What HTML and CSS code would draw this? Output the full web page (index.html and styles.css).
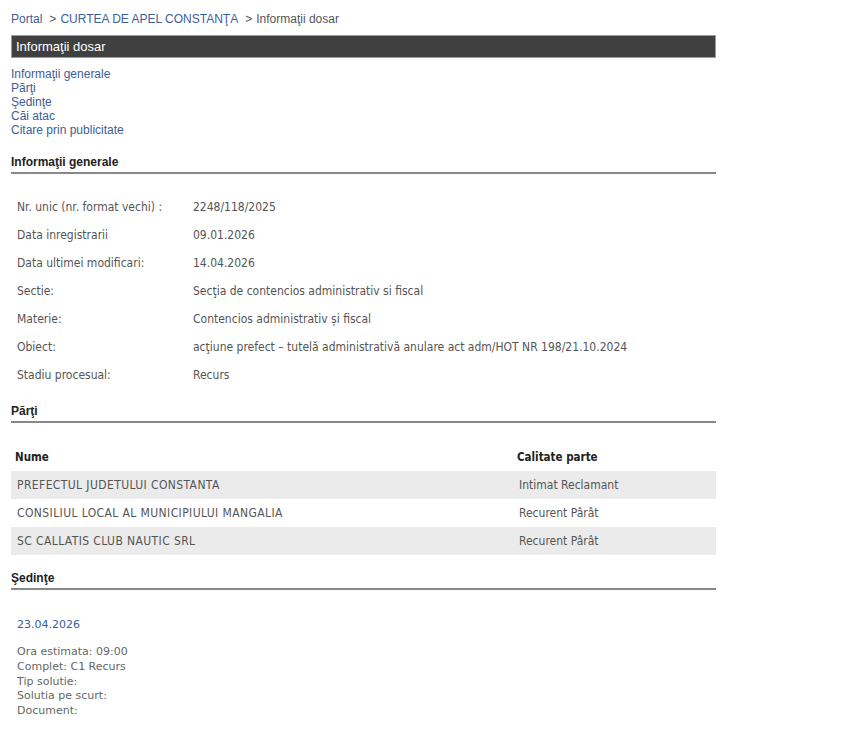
FILE: index.html
```html
<!DOCTYPE html>
<html lang="ro">
<head>
    <meta charset="UTF-8">
    <title>Informaţii dosar</title>
    <link rel="stylesheet" href="styles.css">
</head>
<body>
<div class="pagina">
    <div class="breadcrumb">
        <a href="#">Portal</a><span class="sep">&gt;</span><a href="#">CURTEA DE APEL CONSTANŢA</a><span class="sep">&gt;</span>Informaţii dosar
    </div>
    <div class="titlu">Informaţii dosar</div>

    <ul class="cuprins">
        <li><a href="#generale">Informaţii generale</a></li>
        <li><a href="#parti">Părţi</a></li>
        <li><a href="#sedinte">Şedinţe</a></li>
        <li><a href="#cai">Căi atac</a></li>
        <li><a href="#citare">Citare prin publicitate</a></li>
    </ul>

    <h3 class="sectiune" id="generale">Informaţii generale</h3>
    <table class="detalii">
        <tr><td class="eticheta">Nr. unic (nr. format vechi) :</td><td>2248/118/2025</td></tr>
        <tr><td class="eticheta">Data inregistrarii</td><td>09.01.2026</td></tr>
        <tr><td class="eticheta">Data ultimei modificari:</td><td>14.04.2026</td></tr>
        <tr><td class="eticheta">Sectie:</td><td>Secţia de contencios administrativ si fiscal</td></tr>
        <tr><td class="eticheta">Materie:</td><td>Contencios administrativ și fiscal</td></tr>
        <tr><td class="eticheta">Obiect:</td><td>acţiune prefect – tutelă administrativă anulare act adm/HOT NR 198/21.10.2024</td></tr>
        <tr><td class="eticheta">Stadiu procesual:</td><td>Recurs</td></tr>
    </table>

    <h3 class="sectiune" id="parti">Părţi</h3>
    <table class="parti">
        <tr><th>Nume</th><th class="calitate">Calitate parte</th></tr>
        <tr class="gri"><td class="nume">PREFECTUL JUDETULUI CONSTANTA</td><td>Intimat Reclamant</td></tr>
        <tr><td class="nume">CONSILIUL LOCAL AL MUNICIPIULUI MANGALIA</td><td>Recurent Pârât</td></tr>
        <tr class="gri"><td class="nume">SC CALLATIS CLUB NAUTIC SRL</td><td>Recurent Pârât</td></tr>
    </table>

    <h3 class="sectiune" id="sedinte">Şedinţe</h3>
    <div class="sedinta">
        <div class="data">23.04.2026</div>
        <div class="info">
            Ora estimata: 09:00<br>
            Complet: C1 Recurs<br>
            Tip solutie:<br>
            Solutia pe scurt:<br>
            Document:
        </div>
    </div>
</div>
</body>
</html>
```

FILE: styles.css
```css
*{
    margin: 0;
    padding: 0;
}
body{
    font-family: "Liberation Sans", Arial, sans-serif;
    font-size: 12px;
    color: #333;
    background: #fff;
}
a{
    color: #3b5e9b;
    text-decoration: none;
}
.pagina{
    width: 705px;
    margin-left: 11px;
    padding-top: 12px;
}
.breadcrumb{
    color: #555;
    line-height: 14px;
}
.breadcrumb .sep{
    margin: 0 4px 0 7px;
}
.titlu{
    margin-top: 9px;
    height: 21px;
    line-height: 21px;
    padding-left: 4px;
    background: #404040;
    border: 1px solid #9a9a9a;
    color: #fff;
    font-size: 13px;
}
.cuprins{
    list-style: none;
    margin-top: 9px;
    line-height: 14px;
}
.sectiune{
    margin-top: 18px;
    padding-bottom: 3px;
    border-bottom: 2px solid #888;
    font-size: 12px;
    color: #222;
}
.detalii{
    border-collapse: collapse;
    margin-top: 19px;
    font-family: "DejaVu Sans Condensed", "DejaVu Sans", sans-serif;
    font-size: 12px;
    color: #555;
}
.detalii td{
    height: 28px;
    padding-left: 6px;
    vertical-align: middle;
}
.detalii td.eticheta{
    width: 170px;
}
.detalii + .sectiune{
    margin-top: 15px;
}
.parti{
    width: 100%;
    border-collapse: collapse;
    margin-top: 19px;
    font-family: "DejaVu Sans Condensed", "DejaVu Sans", sans-serif;
    font-size: 12px;
    color: #555;
}
.parti th{
    text-align: left;
    color: #222;
    font-size: 11.5px;
    height: 29px;
    padding-left: 4px;
}
.parti th.calitate{
    width: 199px;
}
.parti td{
    height: 28px;
    padding-left: 6px;
}
.parti td.nume{
    letter-spacing: 0.4px;
}
.parti tr.gri{
    background: #ebebeb;
}
.parti + .sectiune{
    margin-top: 16px;
}
.sedinta{
    padding-left: 6px;
    font-family: "DejaVu Sans", Verdana, sans-serif;
    font-size: 11px;
}
.sedinta .data{
    margin-top: 28px;
    color: #3b5e9b;
}
.sedinta .info{
    margin-top: 14px;
    line-height: 14.8px;
    color: #666;
}
```
